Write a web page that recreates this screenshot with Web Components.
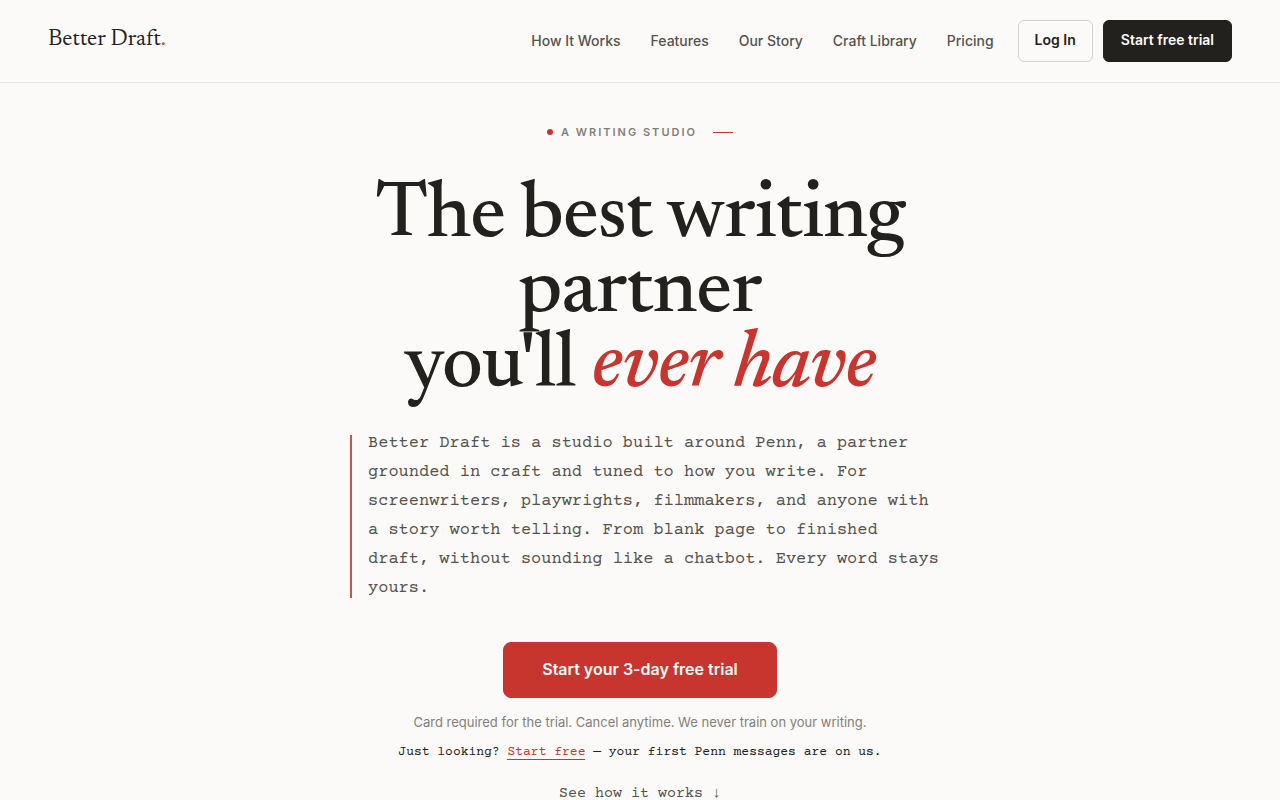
<!DOCTYPE html>
<html lang="en">
<head>
<meta charset="utf-8">
<meta name="viewport" content="width=device-width, initial-scale=1">
<title>Better Draft</title>
<style>
  :root {
    --paper: #fcfaf8;
    --ink: #22211d;
    --ink-soft: #55534d;
    --ink-mute: #828078;
    --rule: #e8e6e2;
    --edge: #d4d2cd;
    --red: #c7352e;
    --sans: Inter, "Liberation Sans", sans-serif;
    --serif: Newsreader, "Liberation Serif", serif;
    --display: "Newsreader Display", "Newsreader 60pt", "Newsreader 72pt", Newsreader, "Liberation Serif", serif;
    --mono: "Courier Prime", "Liberation Mono", monospace;
  }
  body { margin: 0; background: var(--paper); color: var(--ink); font-family: var(--sans); }
</style>
</head>
<body>
<site-header>
  <brand-mark slot="brand">Better Draft</brand-mark>
  <nav-link href="#how">How It Works</nav-link>
  <nav-link href="#features">Features</nav-link>
  <nav-link href="#story">Our Story</nav-link>
  <nav-link href="#library">Craft Library</nav-link>
  <nav-link href="#pricing">Pricing</nav-link>
  <action-button slot="actions" kind="outline">Log In</action-button>
  <action-button slot="actions" kind="dark">Start free trial</action-button>
</site-header>
<hero-section>
  <eyebrow-label slot="eyebrow">A Writing Studio</eyebrow-label>
  <hero-title slot="title" accent="ever have">The best writing partner<br>you'll</hero-title>
  <lead-quote slot="lead">Better Draft is a studio built around Penn, a partner grounded in craft and tuned to how you write. For screenwriters, playwrights, filmmakers, and anyone with a story worth telling. From blank page to finished draft, without sounding like a chatbot. Every word stays yours.</lead-quote>
  <hero-actions slot="actions"></hero-actions>
</hero-section>

<script>
  const define = (name, markup, setup) => {
    const template = document.createElement('template');
    template.innerHTML = markup;
    customElements.define(name, class extends HTMLElement {
      constructor() {
        super();
        this.attachShadow({ mode: 'open' }).append(template.content.cloneNode(true));
      }
      connectedCallback() { if (setup) setup(this, this.shadowRoot); }
    });
  };

  define('brand-mark', `
    <style>
      :host { display: block; }
      a { font: 400 23px/28px var(--serif); color: var(--ink); text-decoration: none; white-space: nowrap; }
      span { color: var(--red); }
    </style>
    <a href="#"><slot></slot><span>.</span></a>`);

  define('nav-link', `
    <style>
      :host { display: block; }
      a { font: 500 14px/22px var(--sans); color: var(--ink-soft); text-decoration: none; white-space: nowrap; }
    </style>
    <a><slot></slot></a>`,
    (host, root) => { root.querySelector('a').href = host.getAttribute('href'); });

  define('action-button', `
    <style>
      :host { display: block; }
      button {
        display: block; box-sizing: border-box; margin: 0; padding: 9px 16px 11px;
        font: 600 14px/20px var(--sans); white-space: nowrap; cursor: pointer;
        color: var(--ink); background: transparent; border: 1px solid var(--edge); border-radius: 6px;
      }
      :host([kind="dark"]) button { padding-inline: 17px; color: var(--paper); background: var(--ink); border-color: var(--ink); }
      :host([kind="primary"]) button {
        padding: 14px 38px 16px; font-size: 16px; line-height: 24px;
        color: var(--paper); background: var(--red); border-color: var(--red); border-radius: 8px;
      }
    </style>
    <button type="button"><slot></slot></button>`);

  define('site-header', `
    <style>
      :host { display: block; border-bottom: 1px solid var(--rule); }
      header { display: flex; justify-content: space-between; align-items: flex-start; padding: 20px 48px; }
      .brand { padding-top: 6px; }
      .right { display: flex; align-items: center; gap: 24px; }
      nav { display: flex; gap: 30px; }
      .actions { display: flex; gap: 10px; }
    </style>
    <header>
      <div class="brand"><slot name="brand"></slot></div>
      <div class="right">
        <nav aria-label="Main"><slot></slot></nav>
        <div class="actions"><slot name="actions"></slot></div>
      </div>
    </header>`);

  define('eyebrow-label', `
    <style>
      :host { display: flex; justify-content: center; align-items: center; gap: 8px; }
      .dot { width: 6px; height: 6px; border-radius: 50%; background: var(--red); }
      .text { font: 600 11px/18px var(--sans); letter-spacing: 2px; text-transform: uppercase; color: var(--ink-mute); }
      .dash { width: 20px; height: 1px; margin-left: 8px; background: var(--red); }
    </style>
    <span class="dot"></span><span class="text"><slot></slot></span><span class="dash"></span>`);

  define('hero-title', `
    <style>
      :host { display: block; }
      h1 { margin: 0; font: 500 80px/75px var(--display); letter-spacing: -1px; text-align: center; color: var(--ink); }
      em { color: var(--red); }
    </style>
    <h1><slot></slot> <em></em></h1>`,
    (host, root) => { root.querySelector('em').textContent = host.getAttribute('accent'); });

  define('lead-quote', `
    <style>
      :host { display: block; position: relative; padding-left: 18px; margin-right: -12px; }
      :host::before { content: ""; position: absolute; left: 0; top: 6px; bottom: 5px; width: 2px; background: var(--red); opacity: .85; }
      p { margin: 0; font: 17px/29px var(--mono); color: var(--ink-soft); }
    </style>
    <p><slot></slot></p>`);

  define('hero-actions', `
    <style>
      :host { display: flex; flex-direction: column; align-items: center; text-align: center; }
      p { margin: 0; }
      .note { margin-top: 14px; font: 13px/20px var(--sans); color: var(--ink-mute); }
      .free { margin-top: 10px; font: 13px/20px var(--mono); color: var(--ink); }
      .free a { color: var(--red); text-decoration: none; border-bottom: 1px solid var(--red); }
      .more { margin-top: 20px; padding-bottom: 40px; font: 15px/24px var(--mono); color: var(--ink-soft); text-decoration: none; }
    </style>
    <action-button kind="primary">Start your 3-day free trial</action-button>
    <p class="note">Card required for the trial. Cancel anytime. We never train on your writing.</p>
    <p class="free">Just looking? <a href="#free">Start free</a> — your first Penn messages are on us.</p>
    <a class="more" href="#how">See how it works ↓</a>`);

  define('hero-section', `
    <style>
      :host { display: block; }
      main { max-width: 580px; margin: 0 auto; padding: 40px 24px 0; }
      .title { margin-top: 39px; }
      .lead { margin-top: 24px; }
      .actions { margin-top: 39px; }
    </style>
    <main>
      <slot name="eyebrow"></slot>
      <div class="title"><slot name="title"></slot></div>
      <div class="lead"><slot name="lead"></slot></div>
      <div class="actions"><slot name="actions"></slot></div>
    </main>`);
</script>
</body>
</html>
